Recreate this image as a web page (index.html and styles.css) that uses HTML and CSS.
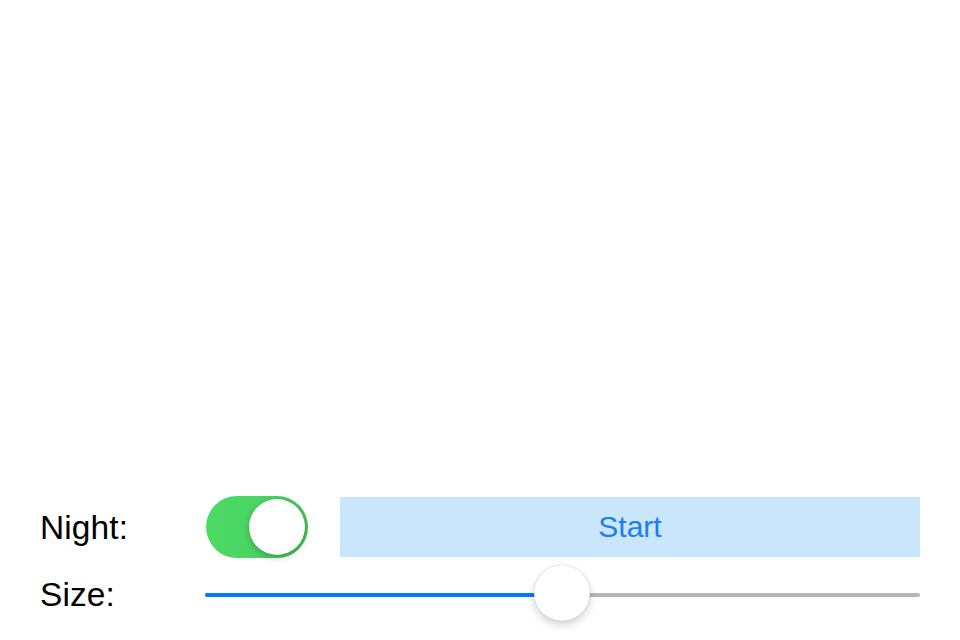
FILE: index.html
```html
<!DOCTYPE html>
<html>
<head>
<meta charset="utf-8">
<link rel="stylesheet" href="styles.css">
</head>
<body>
<div class="screen">
  <div class="canvas"></div>
  <div class="controls">
    <div class="row row-night">
      <div class="label">Night:</div>
      <div class="switch on"><div class="switch-knob"></div></div>
      <button class="start">Start</button>
    </div>
    <div class="row row-size">
      <div class="label">Size:</div>
      <div class="slider">
        <div class="track"><div class="fill" style="width:50%"></div></div>
        <div class="thumb" style="left:50%"></div>
      </div>
    </div>
  </div>
</div>
</body>
</html>
```
FILE: styles.css
```css
html, body {
  margin: 0;
  padding: 0;
  background: #ffffff;
}
.screen {
  width: 960px;
  height: 640px;
  display: flex;
  flex-direction: column;
  font-family: "Liberation Sans", Arial, sans-serif;
  color: #000;
}
.canvas {
  flex: 1;
}
.controls {
  display: flex;
  flex-direction: column;
  gap: 7px;
  padding: 0 40px 19px 40px;
}
.row {
  display: flex;
  align-items: center;
}
.row-night {
  height: 62px;
}
.row-size {
  height: 56px;
}
.label {
  width: 166px;
  flex: none;
  font-size: 33.5px;
  line-height: 40px;
  padding-top: 1px;
  letter-spacing: 0.1px;
}
.row-size .label {
  width: 165px;
  padding-top: 3px;
}
.switch {
  position: relative;
  flex: none;
  width: 102px;
  height: 62px;
  border-radius: 31px;
  background: linear-gradient(90deg, #4cd964 0%, #48d461 60%, #3fc457 100%);
}
.switch-knob {
  position: absolute;
  top: 3px;
  right: 3px;
  width: 56px;
  height: 56px;
  border-radius: 50%;
  background: #fff;
  box-shadow: 0 3px 6px rgba(0,0,0,0.22), 0 0 1px rgba(0,0,0,0.15);
}
.start {
  flex: 1;
  margin-left: 32px;
  height: 60px;
  border: none;
  background: #cae6fc;
  color: #1b7ef2;
  font-family: "Liberation Sans", Arial, sans-serif;
  font-size: 30px;
  padding: 0;
}
.slider {
  position: relative;
  flex: 1;
  height: 56px;
  display: flex;
  align-items: center;
}
.track {
  width: 100%;
  height: 4px;
  margin-top: 4px;
  border-radius: 2px;
  background: #b6b6b6;
  display: flex;
}
.fill {
  height: 4px;
  border-radius: 2px 0 0 2px;
  background: #007aff;
}
.thumb {
  position: absolute;
  top: 0;
  width: 56px;
  height: 56px;
  margin-left: -29px;
  border-radius: 50%;
  background: #fff;
  box-shadow: 0 4px 8px rgba(0,0,0,0.18), 0 0 1px rgba(0,0,0,0.3);
}
```
